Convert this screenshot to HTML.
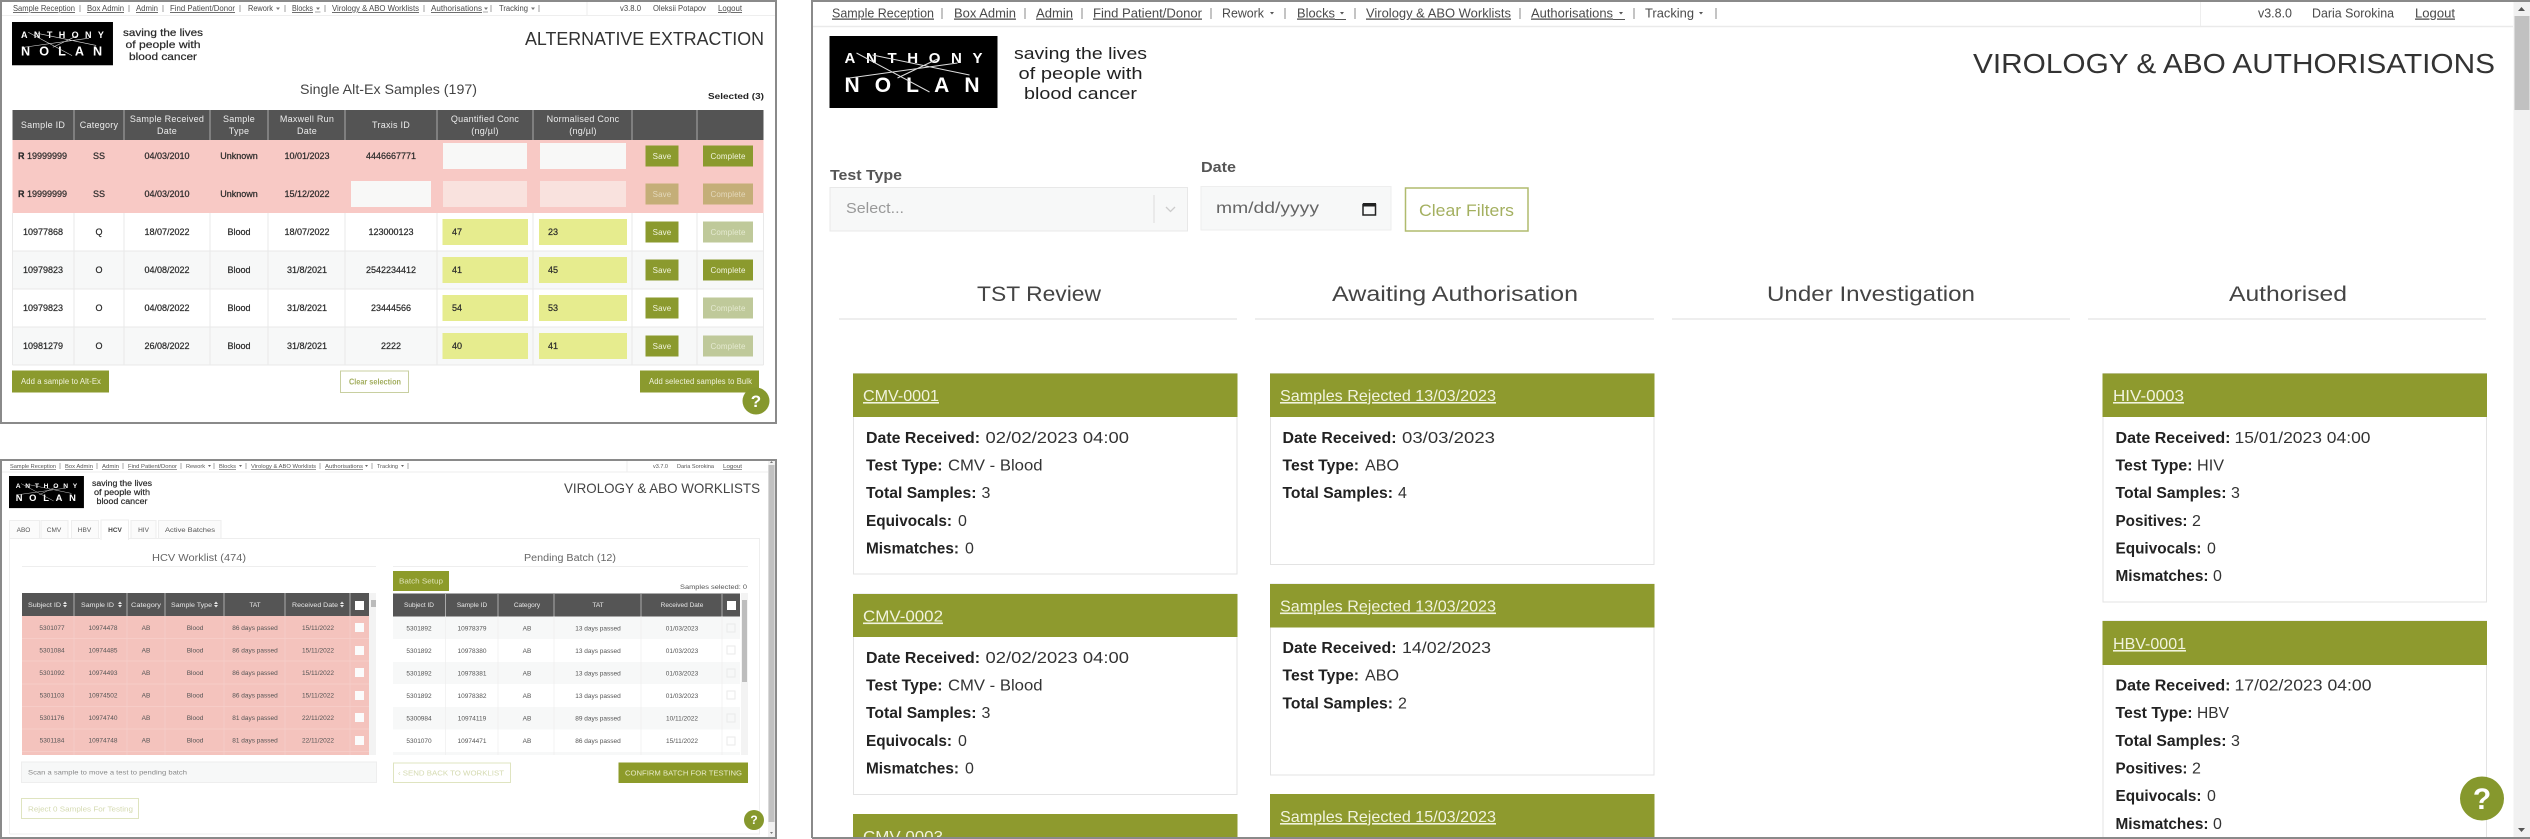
<!DOCTYPE html>
<html lang="en"><head><meta charset="utf-8"><title>Anthony Nolan screens</title>
<style>
html,body{margin:0;padding:0;background:#fff;width:2530px;height:839px;overflow:hidden}
svg{display:block;font-family:"Liberation Sans",sans-serif}
.u{text-decoration:underline}
.m{text-anchor:middle}
.b{font-weight:bold}
.a text{font-size:9px;fill:#2a2a2a}
.a .hd text,.a text.hd{fill:#ececec;letter-spacing:.25px}
.a .nav text{font-size:8px;fill:#4a4a4a}
.a .row text{stroke:#2a2a2a;stroke-width:.22px}
.a .btn{fill:#f1f3dd;font-size:8px;letter-spacing:.1px}
.p2 text{font-size:6.5px;fill:#555}
.p2 .nav text{font-size:5.8px;fill:#555}
.p2 .hd text{fill:#e8e8e8;font-size:6.5px}
.p3 .nav text{font-size:12.5px;fill:#4a4a4a}
.p3 .card text{font-size:16px;fill:#333}
.p3 .card text.b{fill:#222}
.p3 .card text.lk{fill:#f1f3dd;font-size:16px}
.p3 .col text{font-size:21px;fill:#444}
svg text.l1{fill:#fff;font-weight:bold;font-size:15px}
svg text.l2{fill:#fff;font-weight:bold;font-size:21px}
</style></head><body>
<svg width="2530" height="839" viewBox="0 0 2530 839" xmlns="http://www.w3.org/2000/svg">
<rect width="2530" height="839" fill="#fff"/>

<!-- PANEL A -->
<g class="a" style="filter:blur(.3px)">
<g class="nav">
<text class="u" x="13" y="11" textLength="62" lengthAdjust="spacingAndGlyphs">Sample Reception</text>
<text class="u" x="87" y="11" textLength="37" lengthAdjust="spacingAndGlyphs">Box Admin</text>
<text class="u" x="136" y="11" textLength="22" lengthAdjust="spacingAndGlyphs">Admin</text>
<text class="u" x="170" y="11" textLength="65" lengthAdjust="spacingAndGlyphs">Find Patient/Donor</text>
<text x="248" y="11" textLength="25" lengthAdjust="spacingAndGlyphs">Rework</text>
<text class="u" x="292" y="11" textLength="21" lengthAdjust="spacingAndGlyphs">Blocks</text>
<text class="u" x="332" y="11" textLength="87" lengthAdjust="spacingAndGlyphs">Virology &amp; ABO Worklists</text>
<text class="u" x="431" y="11" textLength="51" lengthAdjust="spacingAndGlyphs">Authorisations</text>
<text x="499" y="11" textLength="29" lengthAdjust="spacingAndGlyphs">Tracking</text>
<text x="620" y="11" textLength="21" lengthAdjust="spacingAndGlyphs">v3.8.0</text>
<text x="653" y="11" textLength="53" lengthAdjust="spacingAndGlyphs">Oleksii Potapov</text>
<text class="u" x="718" y="11" textLength="24" lengthAdjust="spacingAndGlyphs">Logout</text>
</g>
<path d="M80 5v7M129 5v7M163 5v7M240 5v7M285 5v7M325 5v7M424 5v7M491 5v7M539 5v7" stroke="#777" stroke-width=".7"/>
<path d="M276 7.5h4l-2 2.5zM316 7.5h4l-2 2.5zM484 7.5h4l-2 2.5zM531 7.5h4l-2 2.5z" fill="#777"/>
<path d="M315 12h5.5M483 12h5" stroke="#555" stroke-width=".6"/>
<path d="M2 15.5h773" stroke="#eee"/><path d="M587 2v13" stroke="#eee"/>

<g transform="translate(12 22) scale(.601)">
<rect width="168" height="72" fill="#000"/>
<text class="l1" x="15" y="27" textLength="138" lengthAdjust="spacing">ANTHONY</text>
<text class="l2" x="15" y="56" textLength="135" lengthAdjust="spacing">NOLAN</text>
<path d="M27 17 100 56M43 19 140 39M20 42 128 27M68 42 108 23" stroke="#ddd" stroke-width="1" fill="none"/>
</g>
<text class="m" x="163" y="36" textLength="80" lengthAdjust="spacingAndGlyphs" style="font-size:10.5px;stroke:#222;stroke-width:.2px">saving the lives</text>
<text class="m" x="163" y="48" textLength="75" lengthAdjust="spacingAndGlyphs" style="font-size:10.5px;stroke:#222;stroke-width:.2px">of people with</text>
<text class="m" x="163" y="60" textLength="68" lengthAdjust="spacingAndGlyphs" style="font-size:10.5px;stroke:#222;stroke-width:.2px">blood cancer</text>
<text x="525" y="45" textLength="239" lengthAdjust="spacingAndGlyphs" style="font-size:18px;fill:#333">ALTERNATIVE EXTRACTION</text>
<text x="300" y="94" textLength="177" lengthAdjust="spacingAndGlyphs" style="font-size:14px;fill:#444">Single Alt-Ex Samples (197)</text>
<text class="b" x="708" y="99" textLength="56" lengthAdjust="spacingAndGlyphs" style="font-size:8.5px;fill:#222">Selected (3)</text>

<!-- table A -->
<rect x="12.5" y="110" width="751" height="30" fill="#545454"/>
<rect x="12.5" y="140" width="751" height="73" fill="#f8c9c5"/>
<rect x="12.5" y="213" width="751" height="38" fill="#fff"/>
<rect x="12.5" y="251" width="751" height="38" fill="#f7f8f8"/>
<rect x="12.5" y="289" width="751" height="38" fill="#fff"/>
<rect x="12.5" y="327" width="751" height="38" fill="#f7f8f8"/>
<path d="M74 213v152M124 213v152M210 213v152M268 213v152M345 213v152M437 213v152M533 213v152M632 213v152M697 213v152M12.5 213v152M763.5 213v152M12.5 251h751M12.5 289h751M12.5 327h751M12.5 365h751" stroke="#e9e9e9" stroke-width="1" fill="none"/>
<path d="M74 110v30M124 110v30M210 110v30M268 110v30M345 110v30M437 110v30M533 110v30M632 110v30M697 110v30" stroke="#aaa" stroke-width="1"/>
<g class="hd">
<text class="m" x="43" y="128">Sample ID</text>
<text class="m" x="99" y="128">Category</text>
<text class="m" x="167" y="122">Sample Received</text><text class="m" x="167" y="134">Date</text>
<text class="m" x="239" y="122">Sample</text><text class="m" x="239" y="134">Type</text>
<text class="m" x="307" y="122">Maxwell Run</text><text class="m" x="307" y="134">Date</text>
<text class="m" x="391" y="128">Traxis ID</text>
<text class="m" x="485" y="122">Quantified Conc</text><text class="m" x="485" y="134">(ng/µl)</text>
<text class="m" x="583" y="122">Normalised Conc</text><text class="m" x="583" y="134">(ng/µl)</text>
</g>
<g class="row">
<text x="18" y="159"><tspan class="b">R</tspan> 19999999</text><text class="m" x="99" y="159">SS</text><text class="m" x="167" y="159">04/03/2010</text><text class="m" x="239" y="159">Unknown</text><text class="m" x="307" y="159">10/01/2023</text><text class="m" x="391" y="159">4446667771</text>
<text x="18" y="197"><tspan class="b">R</tspan> 19999999</text><text class="m" x="99" y="197">SS</text><text class="m" x="167" y="197">04/03/2010</text><text class="m" x="239" y="197">Unknown</text><text class="m" x="307" y="197">15/12/2022</text>
<text class="m" x="43" y="235">10977868</text><text class="m" x="99" y="235">Q</text><text class="m" x="167" y="235">18/07/2022</text><text class="m" x="239" y="235">Blood</text><text class="m" x="307" y="235">18/07/2022</text><text class="m" x="391" y="235">123000123</text>
<text class="m" x="43" y="273">10979823</text><text class="m" x="99" y="273">O</text><text class="m" x="167" y="273">04/08/2022</text><text class="m" x="239" y="273">Blood</text><text class="m" x="307" y="273">31/8/2021</text><text class="m" x="391" y="273">2542234412</text>
<text class="m" x="43" y="311">10979823</text><text class="m" x="99" y="311">O</text><text class="m" x="167" y="311">04/08/2022</text><text class="m" x="239" y="311">Blood</text><text class="m" x="307" y="311">31/8/2021</text><text class="m" x="391" y="311">23444566</text>
<text class="m" x="43" y="349">10981279</text><text class="m" x="99" y="349">O</text><text class="m" x="167" y="349">26/08/2022</text><text class="m" x="239" y="349">Blood</text><text class="m" x="307" y="349">31/8/2021</text><text class="m" x="391" y="349">2222</text>
</g>
<rect x="443" y="143" width="84" height="26" fill="#f8f8f7"/><rect x="540" y="143" width="86" height="26" fill="#f8f8f7"/>
<rect x="351" y="181" width="80" height="26" fill="#f8f8f7"/><rect x="443" y="181" width="84" height="26" fill="#f9e2de"/><rect x="540" y="181" width="86" height="26" fill="#f9e2de"/>
<g fill="#e6ec8e">
<rect x="442.5" y="219" width="85.5" height="26"/><rect x="539" y="219" width="88" height="26"/>
<rect x="442.5" y="257" width="85.5" height="26"/><rect x="539" y="257" width="88" height="26"/>
<rect x="442.5" y="295" width="85.5" height="26"/><rect x="539" y="295" width="88" height="26"/>
<rect x="442.5" y="333" width="85.5" height="26"/><rect x="539" y="333" width="88" height="26"/>
</g>
<g class="row">
<text x="452" y="235">47</text><text x="548" y="235">23</text>
<text x="452" y="273">41</text><text x="548" y="273">45</text>
<text x="452" y="311">54</text><text x="548" y="311">53</text>
<text x="452" y="349">40</text><text x="548" y="349">41</text>
</g>
<rect x="645.5" y="145.5" width="33" height="21" fill="#8b9a2e"/><rect x="703" y="145.5" width="50" height="21" fill="#8b9a2e"/>
<rect x="645.5" y="183.5" width="33" height="21" fill="#c4ae78"/><rect x="703" y="183.5" width="50" height="21" fill="#c4ae78"/>
<rect x="645.5" y="221.5" width="33" height="21" fill="#8b9a2e"/><rect x="703" y="221.5" width="50" height="21" fill="#bfc99a"/>
<rect x="645.5" y="259.5" width="33" height="21" fill="#8b9a2e"/><rect x="703" y="259.5" width="50" height="21" fill="#8b9a2e"/>
<rect x="645.5" y="297.5" width="33" height="21" fill="#8b9a2e"/><rect x="703" y="297.5" width="50" height="21" fill="#bfc99a"/>
<rect x="645.5" y="335.5" width="33" height="21" fill="#8b9a2e"/><rect x="703" y="335.5" width="50" height="21" fill="#bfc99a"/>
<g>
<text class="m btn" x="662" y="159">Save</text><text class="m btn" x="728" y="159">Complete</text>
<text class="m btn" x="662" y="197" style="fill:#e3d8bb">Save</text><text class="m btn" x="728" y="197" style="fill:#e3d8bb">Complete</text>
<text class="m btn" x="662" y="235">Save</text><text class="m btn" x="728" y="235" style="fill:#e4e9d0">Complete</text>
<text class="m btn" x="662" y="273">Save</text><text class="m btn" x="728" y="273">Complete</text>
<text class="m btn" x="662" y="311">Save</text><text class="m btn" x="728" y="311" style="fill:#e4e9d0">Complete</text>
<text class="m btn" x="662" y="349">Save</text><text class="m btn" x="728" y="349" style="fill:#e4e9d0">Complete</text>
</g>
<rect x="12" y="370.5" width="97" height="22" fill="#8b9a2e"/>
<text class="btn" x="21" y="384" textLength="80" lengthAdjust="spacingAndGlyphs">Add a sample to Alt-Ex</text>
<rect x="340.5" y="371" width="68" height="21.5" fill="#fff" stroke="#c8cfa0"/>
<text class="b" x="349" y="384.5" textLength="52" lengthAdjust="spacingAndGlyphs" style="font-size:8px;fill:#a3ae5f">Clear selection</text>
<rect x="640" y="370.5" width="119" height="22" fill="#8b9a2e"/>
<text class="btn" x="649" y="384" textLength="103" lengthAdjust="spacingAndGlyphs">Add selected samples to Bulk</text>
<circle cx="756" cy="401" r="13.5" fill="#86982d"/>
<text class="m b" x="756" y="407" style="font-size:17px;fill:#fff">?</text>
</g>
<path d="M1 423V1H776V423Z" fill="none" stroke="#8a8a8a" stroke-width="2"/>

<!-- PANEL B -->
<g class="p2" style="filter:blur(.35px)">
<g class="nav">
<text class="u" x="10" y="468" textLength="46" lengthAdjust="spacingAndGlyphs">Sample Reception</text>
<text class="u" x="65" y="468" textLength="28" lengthAdjust="spacingAndGlyphs">Box Admin</text>
<text class="u" x="102" y="468" textLength="17" lengthAdjust="spacingAndGlyphs">Admin</text>
<text class="u" x="128" y="468" textLength="49" lengthAdjust="spacingAndGlyphs">Find Patient/Donor</text>
<text x="186" y="468" textLength="19" lengthAdjust="spacingAndGlyphs">Rework</text>
<text class="u" x="219" y="468" textLength="17" lengthAdjust="spacingAndGlyphs">Blocks</text>
<text class="u" x="251" y="468" textLength="65" lengthAdjust="spacingAndGlyphs">Virology &amp; ABO Worklists</text>
<text class="u" x="325" y="468" textLength="38" lengthAdjust="spacingAndGlyphs">Authorisations</text>
<text x="377" y="468" textLength="21" lengthAdjust="spacingAndGlyphs">Tracking</text>
<text x="653" y="468" textLength="15" lengthAdjust="spacingAndGlyphs">v3.7.0</text>
<text x="677" y="468" textLength="37" lengthAdjust="spacingAndGlyphs">Daria Sorokina</text>
<text class="u" x="723" y="468" textLength="19" lengthAdjust="spacingAndGlyphs">Logout</text>
</g>
<path d="M60 463v6M97 463v6M123 463v6M181 463v6M214 463v6M246 463v6M320 463v6M372 463v6M408 463v6" stroke="#888" stroke-width=".7"/>
<path d="M208 465h3l-1.5 2zM239 465h3l-1.5 2zM365 465h3l-1.5 2zM401 465h3l-1.5 2z" fill="#666"/>
<path d="M2 472h766" stroke="#eee"/><path d="M627 461v11" stroke="#eee"/>

<g transform="translate(9 476) scale(.446)">
<rect width="168" height="72" fill="#000"/>
<text class="l1" x="15" y="27" textLength="138" lengthAdjust="spacing">ANTHONY</text>
<text class="l2" x="15" y="56" textLength="135" lengthAdjust="spacing">NOLAN</text>
<path d="M27 17 100 56M43 19 140 39M20 42 128 27M68 42 108 23" stroke="#ddd" stroke-width="1" fill="none"/>
</g>
<text class="m" x="122" y="486" textLength="60" lengthAdjust="spacingAndGlyphs" style="font-size:8px;fill:#222;stroke:#222;stroke-width:.15px">saving the lives</text>
<text class="m" x="122" y="495" textLength="56" lengthAdjust="spacingAndGlyphs" style="font-size:8px;fill:#222;stroke:#222;stroke-width:.15px">of people with</text>
<text class="m" x="122" y="504" textLength="51" lengthAdjust="spacingAndGlyphs" style="font-size:8px;fill:#222;stroke:#222;stroke-width:.15px">blood cancer</text>
<text x="564" y="493" textLength="196" lengthAdjust="spacingAndGlyphs" style="font-size:14px;fill:#444">VIROLOGY &amp; ABO WORKLISTS</text>

<!-- tabs -->
<path d="M9.5 834V538.5H100M128.5 538.5H759.5V834H9.5" fill="none" stroke="#eee"/>
<g fill="#fbfbfb" stroke="#eee">
<rect x="9.5" y="520.5" width="30" height="18"/><rect x="41" y="520.5" width="27" height="18"/><rect x="71.5" y="520.5" width="27" height="18"/><rect x="131" y="520.5" width="25" height="18"/><rect x="158.5" y="520.5" width="62.5" height="18"/>
</g>
<rect x="101" y="520" width="27.5" height="19.5" fill="#fff" stroke="#eee"/>
<path d="M101.5 539h26.5" stroke="#fff" stroke-width="2"/>
<text class="m" x="23.5" y="532">ABO</text><text class="m" x="54" y="532">CMV</text><text class="m" x="84.5" y="532">HBV</text><text class="m b" x="115" y="532" style="fill:#444">HCV</text><text class="m" x="143.5" y="532">HIV</text><text class="m" x="190" y="532" textLength="50" lengthAdjust="spacingAndGlyphs">Active Batches</text>

<text x="152" y="561" textLength="94" lengthAdjust="spacingAndGlyphs" style="font-size:10px;fill:#666">HCV Worklist (474)</text>
<text x="524" y="561" textLength="92" lengthAdjust="spacingAndGlyphs" style="font-size:10px;fill:#666">Pending Batch (12)</text>
<path d="M22 566.5h354M393 566.5h355" stroke="#eee"/>
<rect x="393" y="571" width="56" height="20" fill="#8d9b2a"/>
<text x="399" y="583.5" textLength="44" lengthAdjust="spacingAndGlyphs" style="font-size:7px;fill:#dfe3b8">Batch Setup</text>
<text x="680" y="589" textLength="67" lengthAdjust="spacingAndGlyphs">Samples selected: 0</text>

<!-- left table -->
<rect x="22" y="593" width="347" height="23" fill="#555"/>
<rect x="22" y="616" width="347" height="139" fill="#f4c3bd"/>
<path d="M22 638.5h347M22 661h347M22 684h347M22 706.5h347M22 729h347M22 751.5h347" stroke="#f6cfca" stroke-width=".7"/>
<path d="M74 616v139M127 616v139M165 616v139M224 616v139M285 616v139M350 616v139" stroke="#f6cfca" stroke-width=".7"/>
<path d="M74 593v23M127 593v23M165 593v23M224 593v23M285 593v23M350 593v23" stroke="#aaa"/>
<g class="hd">
<text x="28" y="607" textLength="33" lengthAdjust="spacingAndGlyphs">Subject ID</text>
<text x="81" y="607" textLength="33" lengthAdjust="spacingAndGlyphs">Sample ID</text>
<text x="131" y="607" textLength="30" lengthAdjust="spacingAndGlyphs">Category</text>
<text x="171" y="607" textLength="41" lengthAdjust="spacingAndGlyphs">Sample Type</text>
<text class="m" x="255" y="607">TAT</text>
<text x="292" y="607" textLength="46" lengthAdjust="spacingAndGlyphs">Received Date</text>
</g>
<path d="M63 604l2-2.5 2 2.5zM63 605l2 2.5 2-2.5zM118 604l2-2.5 2 2.5zM118 605l2 2.5 2-2.5zM214 604l2-2.5 2 2.5zM214 605l2 2.5 2-2.5zM340 604l2-2.5 2 2.5zM340 605l2 2.5 2-2.5z" fill="#e8e8e8"/>
<rect x="355" y="601" width="9" height="9" fill="#fff"/>
<g>
<text class="m" x="52" y="630">5301077</text><text class="m" x="103" y="630">10974478</text><text class="m" x="146" y="630">AB</text><text class="m" x="195" y="630">Blood</text><text class="m" x="255" y="630">86 days passed</text><text class="m" x="318" y="630">15/11/2022</text>
<text class="m" x="52" y="652.5">5301084</text><text class="m" x="103" y="652.5">10974485</text><text class="m" x="146" y="652.5">AB</text><text class="m" x="195" y="652.5">Blood</text><text class="m" x="255" y="652.5">86 days passed</text><text class="m" x="318" y="652.5">15/11/2022</text>
<text class="m" x="52" y="675">5301092</text><text class="m" x="103" y="675">10974493</text><text class="m" x="146" y="675">AB</text><text class="m" x="195" y="675">Blood</text><text class="m" x="255" y="675">86 days passed</text><text class="m" x="318" y="675">15/11/2022</text>
<text class="m" x="52" y="697.5">5301103</text><text class="m" x="103" y="697.5">10974502</text><text class="m" x="146" y="697.5">AB</text><text class="m" x="195" y="697.5">Blood</text><text class="m" x="255" y="697.5">86 days passed</text><text class="m" x="318" y="697.5">15/11/2022</text>
<text class="m" x="52" y="720">5301176</text><text class="m" x="103" y="720">10974740</text><text class="m" x="146" y="720">AB</text><text class="m" x="195" y="720">Blood</text><text class="m" x="255" y="720">81 days passed</text><text class="m" x="318" y="720">22/11/2022</text>
<text class="m" x="52" y="742.5">5301184</text><text class="m" x="103" y="742.5">10974748</text><text class="m" x="146" y="742.5">AB</text><text class="m" x="195" y="742.5">Blood</text><text class="m" x="255" y="742.5">81 days passed</text><text class="m" x="318" y="742.5">22/11/2022</text>
</g>
<g fill="#fbfbfb"><rect x="355" y="623" width="9" height="9"/><rect x="355" y="646" width="9" height="9"/><rect x="355" y="668" width="9" height="9"/><rect x="355" y="691" width="9" height="9"/><rect x="355" y="713" width="9" height="9"/><rect x="355" y="736" width="9" height="9"/></g>
<rect x="369" y="593" width="7" height="162" fill="#f3f3f3"/><rect x="371" y="600" width="5" height="7" fill="#bbb"/>

<!-- right table -->
<rect x="393" y="593.5" width="347" height="23" fill="#555"/>
<rect x="393" y="616.5" width="347" height="138.5" fill="#fff"/>
<g fill="#f7f8f8"><rect x="393" y="616.5" width="347" height="22.5"/><rect x="393" y="662" width="347" height="22"/><rect x="393" y="707" width="347" height="22.5"/><rect x="393" y="752" width="347" height="3"/></g>
<path d="M445.5 616v139M498 616v139M554 616v139M641 616v139M722 616v139" stroke="#eee" stroke-width=".7"/>
<path d="M445.5 593v23M498 593v23M554 593v23M641 593v23M722 593v23" stroke="#aaa"/>
<g class="hd">
<text class="m" x="419" y="607">Subject ID</text><text class="m" x="472" y="607">Sample ID</text><text class="m" x="527" y="607">Category</text><text class="m" x="598" y="607">TAT</text><text class="m" x="682" y="607">Received Date</text>
</g>
<rect x="727" y="601" width="9" height="9" fill="#fff"/>
<g>
<text class="m" x="419" y="630.5">5301892</text><text class="m" x="472" y="630.5">10978379</text><text class="m" x="527" y="630.5">AB</text><text class="m" x="598" y="630.5">13 days passed</text><text class="m" x="682" y="630.5">01/03/2023</text>
<text class="m" x="419" y="653">5301892</text><text class="m" x="472" y="653">10978380</text><text class="m" x="527" y="653">AB</text><text class="m" x="598" y="653">13 days passed</text><text class="m" x="682" y="653">01/03/2023</text>
<text class="m" x="419" y="675.5">5301892</text><text class="m" x="472" y="675.5">10978381</text><text class="m" x="527" y="675.5">AB</text><text class="m" x="598" y="675.5">13 days passed</text><text class="m" x="682" y="675.5">01/03/2023</text>
<text class="m" x="419" y="698">5301892</text><text class="m" x="472" y="698">10978382</text><text class="m" x="527" y="698">AB</text><text class="m" x="598" y="698">13 days passed</text><text class="m" x="682" y="698">01/03/2023</text>
<text class="m" x="419" y="720.5">5300984</text><text class="m" x="472" y="720.5">10974119</text><text class="m" x="527" y="720.5">AB</text><text class="m" x="598" y="720.5">89 days passed</text><text class="m" x="682" y="720.5">10/11/2022</text>
<text class="m" x="419" y="743">5301070</text><text class="m" x="472" y="743">10974471</text><text class="m" x="527" y="743">AB</text><text class="m" x="598" y="743">86 days passed</text><text class="m" x="682" y="743">15/11/2022</text>
</g>
<g fill="none" stroke="#eaeaea"><rect x="727" y="624" width="8" height="8"/><rect x="727" y="646" width="8" height="8"/><rect x="727" y="669" width="8" height="8"/><rect x="727" y="691" width="8" height="8"/><rect x="727" y="714" width="8" height="8"/><rect x="727" y="737" width="8" height="8"/></g>
<rect x="741" y="593" width="7" height="162" fill="#f3f3f3"/><rect x="742" y="600" width="5" height="82" fill="#bdbdbd"/>

<!-- controls -->
<rect x="21.5" y="762" width="355" height="20.5" fill="#f7f8f8" stroke="#eee"/>
<text x="28" y="774.5" textLength="159" lengthAdjust="spacingAndGlyphs" style="fill:#888">Scan a sample to move a test to pending batch</text>
<rect x="393.5" y="763" width="117" height="19.5" fill="#fff" stroke="#dfe4c0"/>
<text x="398" y="775.5" textLength="106" lengthAdjust="spacingAndGlyphs" style="font-size:7.5px;fill:#d4dab0">‹ SEND BACK TO WORKLIST</text>
<rect x="618.5" y="762.5" width="129.5" height="20.5" fill="#8d9b2a"/>
<text x="625" y="775.5" textLength="117" lengthAdjust="spacingAndGlyphs" style="font-size:7.5px;fill:#e8ebc8">CONFIRM BATCH FOR TESTING</text>
<rect x="21.5" y="798.5" width="117" height="20" fill="#fff" stroke="#dfe4c0"/>
<text x="28" y="811.5" textLength="105" lengthAdjust="spacingAndGlyphs" style="font-size:7.5px;fill:#d4dab0">Reject 0 Samples For Testing</text>
<!-- scrollbar -->
<rect x="768" y="461" width="7" height="376" fill="#f1f1f1"/><rect x="768.5" y="465" width="6" height="357" fill="#c1c1c1"/>
<path d="M770 463l1.5-2 1.5 2zM770 832l1.5 2 1.5-2z" fill="#777"/>
<circle cx="754" cy="820" r="10" fill="#86982d"/>
<text class="m b" x="754" y="824" style="font-size:12px;fill:#fff">?</text>
</g>
<path d="M1 838V460H776V838Z" fill="none" stroke="#8a8a8a" stroke-width="2"/>

<!-- PANEL C -->
<g class="p3">
<g class="nav">
<text class="u" x="832" y="17.5" textLength="102" lengthAdjust="spacingAndGlyphs">Sample Reception</text>
<text class="u" x="954" y="17.5" textLength="62" lengthAdjust="spacingAndGlyphs">Box Admin</text>
<text class="u" x="1036" y="17.5" textLength="37" lengthAdjust="spacingAndGlyphs">Admin</text>
<text class="u" x="1093" y="17.5" textLength="109" lengthAdjust="spacingAndGlyphs">Find Patient/Donor</text>
<text x="1222" y="17.5" textLength="42" lengthAdjust="spacingAndGlyphs">Rework</text>
<text class="u" x="1297" y="17.5" textLength="38" lengthAdjust="spacingAndGlyphs">Blocks</text>
<text class="u" x="1366" y="17.5" textLength="145" lengthAdjust="spacingAndGlyphs">Virology &amp; ABO Worklists</text>
<text class="u" x="1531" y="17.5" textLength="82" lengthAdjust="spacingAndGlyphs">Authorisations</text>
<text x="1645" y="17.5" textLength="49" lengthAdjust="spacingAndGlyphs">Tracking</text>
<text x="2258" y="17.5" textLength="34" lengthAdjust="spacingAndGlyphs">v3.8.0</text>
<text x="2312" y="17.5" textLength="82" lengthAdjust="spacingAndGlyphs">Daria Sorokina</text>
<text class="u" x="2415" y="17.5" textLength="40" lengthAdjust="spacingAndGlyphs">Logout</text>
</g>
<path d="M942 8v11M1025 8v11M1082 8v11M1211 8v11M1285 8v11M1355 8v11M1520 8v11M1634 8v11M1716 8v11" stroke="#888"/>
<path d="M1270 12h4l-2 2.5zM1340 12h4l-2 2.5zM1619 12h4l-2 2.5zM1699 12h4l-2 2.5z" fill="#555"/>
<path d="M1335 19.5h11M1613 19.5h12" stroke="#555"/>
<path d="M813 26.5h1700" stroke="#eaeaea" stroke-width="1.5"/><path d="M2200.5 2v24" stroke="#eee"/>

<g transform="translate(829.5 36)">
<rect width="168" height="72" fill="#000"/>
<text class="l1" x="15" y="27" textLength="138" lengthAdjust="spacing">ANTHONY</text>
<text class="l2" x="15" y="56" textLength="135" lengthAdjust="spacing">NOLAN</text>
<path d="M27 17 100 56M43 19 140 39M20 42 128 27M68 42 108 23" stroke="#ddd" stroke-width="1" fill="none"/>
</g>
<text class="m" x="1080.5" y="59" textLength="133" lengthAdjust="spacingAndGlyphs" style="font-size:17px;fill:#222">saving the lives</text>
<text class="m" x="1080.5" y="79" textLength="124" lengthAdjust="spacingAndGlyphs" style="font-size:17px;fill:#222">of people with</text>
<text class="m" x="1080.5" y="99" textLength="113" lengthAdjust="spacingAndGlyphs" style="font-size:17px;fill:#222">blood cancer</text>
<text x="1973" y="73" textLength="522" lengthAdjust="spacingAndGlyphs" style="font-size:28px;fill:#333">VIROLOGY &amp; ABO AUTHORISATIONS</text>

<text class="b" x="830" y="180" textLength="72" lengthAdjust="spacingAndGlyphs" style="font-size:15px;fill:#555">Test Type</text>
<rect x="830" y="187.5" width="357.5" height="43.5" fill="#f7f8f8" stroke="#e8e8e8"/>
<text x="846" y="213" textLength="58" lengthAdjust="spacingAndGlyphs" style="font-size:15px;fill:#999">Select...</text>
<path d="M1154 195v28" stroke="#ddd"/><path d="M1166 207l4.5 4.5 4.5-4.5" fill="none" stroke="#ccc" stroke-width="1.3"/>
<text class="b" x="1201" y="172" textLength="35" lengthAdjust="spacingAndGlyphs" style="font-size:15px;fill:#555">Date</text>
<rect x="1201" y="186.5" width="190" height="43.5" fill="#f7f8f8" stroke="#eee"/>
<text x="1216" y="213" textLength="103" lengthAdjust="spacingAndGlyphs" style="font-size:15.5px;fill:#666">mm/dd/yyyy</text>
<path d="M1363 204.5h12.5v10.5h-12.5z" fill="none" stroke="#222" stroke-width="1.5"/><rect x="1363" y="203" width="13" height="3.5" fill="#222"/>
<rect x="1405.5" y="188" width="122.5" height="43" fill="#fff" stroke="#b0bb6e" stroke-width="1.5"/>
<text x="1419" y="216" textLength="95" lengthAdjust="spacingAndGlyphs" style="font-size:17px;fill:#a4b060">Clear Filters</text>

<g class="col">
<text x="977" y="301" textLength="124" lengthAdjust="spacingAndGlyphs">TST Review</text>
<text x="1332" y="301" textLength="246" lengthAdjust="spacingAndGlyphs">Awaiting Authorisation</text>
<text x="1767" y="301" textLength="208" lengthAdjust="spacingAndGlyphs">Under Investigation</text>
<text x="2229" y="301" textLength="118" lengthAdjust="spacingAndGlyphs">Authorised</text>
</g>
<path d="M839 319h398M1255 319h399M1672 319h398M2088 319h398" stroke="#eeeeee" stroke-width="2"/>

<g class="card">
<!-- col 1 -->
<rect x="853.5" y="373.5" width="383.5" height="200.5" fill="#fff" stroke="#e3e3e3"/><rect x="853" y="373.5" width="384.5" height="43.5" fill="#8e9a2e"/>
<text class="lk u" x="863" y="401" textLength="76" lengthAdjust="spacingAndGlyphs">CMV-0001</text>
<text class="b" x="866" y="443" textLength="114" lengthAdjust="spacingAndGlyphs">Date Received:</text><text x="985.5" y="443" textLength="143.5" lengthAdjust="spacingAndGlyphs">02/02/2023 04:00</text>
<text class="b" x="866" y="470.5" textLength="76.5" lengthAdjust="spacingAndGlyphs">Test Type:</text><text x="948" y="470.5" textLength="94.5" lengthAdjust="spacingAndGlyphs">CMV - Blood</text>
<text class="b" x="866" y="498" textLength="110.5" lengthAdjust="spacingAndGlyphs">Total Samples:</text><text x="981.5" y="498">3</text>
<text class="b" x="866" y="526" textLength="86" lengthAdjust="spacingAndGlyphs">Equivocals:</text><text x="958" y="526">0</text>
<text class="b" x="866" y="553.5" textLength="93" lengthAdjust="spacingAndGlyphs">Mismatches:</text><text x="965" y="553.5">0</text>

<rect x="853.5" y="594" width="383.5" height="200.5" fill="#fff" stroke="#e3e3e3"/><rect x="853" y="594" width="384.5" height="43" fill="#8e9a2e"/>
<text class="lk u" x="863" y="621.5" textLength="80" lengthAdjust="spacingAndGlyphs">CMV-0002</text>
<text class="b" x="866" y="663" textLength="114" lengthAdjust="spacingAndGlyphs">Date Received:</text><text x="985.5" y="663" textLength="143.5" lengthAdjust="spacingAndGlyphs">02/02/2023 04:00</text>
<text class="b" x="866" y="690.5" textLength="76.5" lengthAdjust="spacingAndGlyphs">Test Type:</text><text x="948" y="690.5" textLength="94.5" lengthAdjust="spacingAndGlyphs">CMV - Blood</text>
<text class="b" x="866" y="718" textLength="110.5" lengthAdjust="spacingAndGlyphs">Total Samples:</text><text x="981.5" y="718">3</text>
<text class="b" x="866" y="746" textLength="86" lengthAdjust="spacingAndGlyphs">Equivocals:</text><text x="958" y="746">0</text>
<text class="b" x="866" y="773.5" textLength="93" lengthAdjust="spacingAndGlyphs">Mismatches:</text><text x="965" y="773.5">0</text>

<rect x="853" y="814" width="384.5" height="24" fill="#8e9a2e"/>
<text class="lk u" x="863" y="842" textLength="80" lengthAdjust="spacingAndGlyphs">CMV-0003</text>

<!-- col 2 -->
<rect x="1270.5" y="373.5" width="383.5" height="191" fill="#fff" stroke="#e3e3e3"/><rect x="1270" y="373.5" width="384.5" height="43.5" fill="#8e9a2e"/>
<text class="lk u" x="1280" y="401" textLength="216" lengthAdjust="spacingAndGlyphs">Samples Rejected 13/03/2023</text>
<text class="b" x="1282.5" y="443" textLength="114" lengthAdjust="spacingAndGlyphs">Date Received:</text><text x="1402" y="443" textLength="93" lengthAdjust="spacingAndGlyphs">03/03/2023</text>
<text class="b" x="1282.5" y="470.5" textLength="76.5" lengthAdjust="spacingAndGlyphs">Test Type:</text><text x="1365" y="470.5" textLength="34" lengthAdjust="spacingAndGlyphs">ABO</text>
<text class="b" x="1282.5" y="498" textLength="110.5" lengthAdjust="spacingAndGlyphs">Total Samples:</text><text x="1398" y="498">4</text>

<rect x="1270.5" y="584" width="383.5" height="191" fill="#fff" stroke="#e3e3e3"/><rect x="1270" y="584" width="384.5" height="43.5" fill="#8e9a2e"/>
<text class="lk u" x="1280" y="611.5" textLength="216" lengthAdjust="spacingAndGlyphs">Samples Rejected 13/03/2023</text>
<text class="b" x="1282.5" y="653" textLength="114" lengthAdjust="spacingAndGlyphs">Date Received:</text><text x="1402" y="653" textLength="89" lengthAdjust="spacingAndGlyphs">14/02/2023</text>
<text class="b" x="1282.5" y="680.5" textLength="76.5" lengthAdjust="spacingAndGlyphs">Test Type:</text><text x="1365" y="680.5" textLength="34" lengthAdjust="spacingAndGlyphs">ABO</text>
<text class="b" x="1282.5" y="708.5" textLength="110.5" lengthAdjust="spacingAndGlyphs">Total Samples:</text><text x="1398" y="708.5">2</text>

<rect x="1270" y="794" width="384.5" height="44" fill="#8e9a2e"/>
<text class="lk u" x="1280" y="822" textLength="216" lengthAdjust="spacingAndGlyphs">Samples Rejected 15/03/2023</text>

<!-- col 4 -->
<rect x="2103" y="373.5" width="383.5" height="228.5" fill="#fff" stroke="#e3e3e3"/><rect x="2102.5" y="373.5" width="384.5" height="43.5" fill="#8e9a2e"/>
<text class="lk u" x="2113" y="401" textLength="71" lengthAdjust="spacingAndGlyphs">HIV-0003</text>
<text class="b" x="2115.5" y="443" textLength="115" lengthAdjust="spacingAndGlyphs">Date Received:</text><text x="2234.5" y="443" textLength="136" lengthAdjust="spacingAndGlyphs">15/01/2023 04:00</text>
<text class="b" x="2115.5" y="470.5" textLength="77" lengthAdjust="spacingAndGlyphs">Test Type:</text><text x="2197" y="470.5" textLength="27" lengthAdjust="spacingAndGlyphs">HIV</text>
<text class="b" x="2115.5" y="498" textLength="111" lengthAdjust="spacingAndGlyphs">Total Samples:</text><text x="2231" y="498">3</text>
<text class="b" x="2115.5" y="526" textLength="72" lengthAdjust="spacingAndGlyphs">Positives:</text><text x="2192" y="526">2</text>
<text class="b" x="2115.5" y="553.5" textLength="86" lengthAdjust="spacingAndGlyphs">Equivocals:</text><text x="2207" y="553.5">0</text>
<text class="b" x="2115.5" y="581" textLength="93" lengthAdjust="spacingAndGlyphs">Mismatches:</text><text x="2213" y="581">0</text>

<rect x="2103" y="621" width="383.5" height="230" fill="#fff" stroke="#e3e3e3"/><rect x="2102.5" y="621" width="384.5" height="44" fill="#8e9a2e"/>
<text class="lk u" x="2113" y="649" textLength="73" lengthAdjust="spacingAndGlyphs">HBV-0001</text>
<text class="b" x="2115.5" y="690.5" textLength="115" lengthAdjust="spacingAndGlyphs">Date Received:</text><text x="2234.5" y="690.5" textLength="137" lengthAdjust="spacingAndGlyphs">17/02/2023 04:00</text>
<text class="b" x="2115.5" y="718" textLength="77" lengthAdjust="spacingAndGlyphs">Test Type:</text><text x="2197" y="718" textLength="32" lengthAdjust="spacingAndGlyphs">HBV</text>
<text class="b" x="2115.5" y="746" textLength="111" lengthAdjust="spacingAndGlyphs">Total Samples:</text><text x="2231" y="746">3</text>
<text class="b" x="2115.5" y="773.5" textLength="72" lengthAdjust="spacingAndGlyphs">Positives:</text><text x="2192" y="773.5">2</text>
<text class="b" x="2115.5" y="801" textLength="86" lengthAdjust="spacingAndGlyphs">Equivocals:</text><text x="2207" y="801">0</text>
<text class="b" x="2115.5" y="829" textLength="93" lengthAdjust="spacingAndGlyphs">Mismatches:</text><text x="2213" y="829">0</text>
</g>

<!-- scrollbar -->
<rect x="2513.5" y="2" width="16.5" height="835" fill="#f1f1f1"/>
<rect x="2514.5" y="16" width="15" height="94" fill="#c1c1c1"/>
<path d="M2518 11l3.5-4 3.5 4zM2518 828l3.5 4 3.5-4z" fill="#555"/>
<circle cx="2482" cy="798.5" r="22" fill="#86982d"/>
<text class="m b" x="2482" y="809" style="font-size:30px;fill:#fff">?</text>
</g>
<path d="M812 838V1H2530M812 838H2530" fill="none" stroke="#8a8a8a" stroke-width="2"/>
</svg>
</body></html>
